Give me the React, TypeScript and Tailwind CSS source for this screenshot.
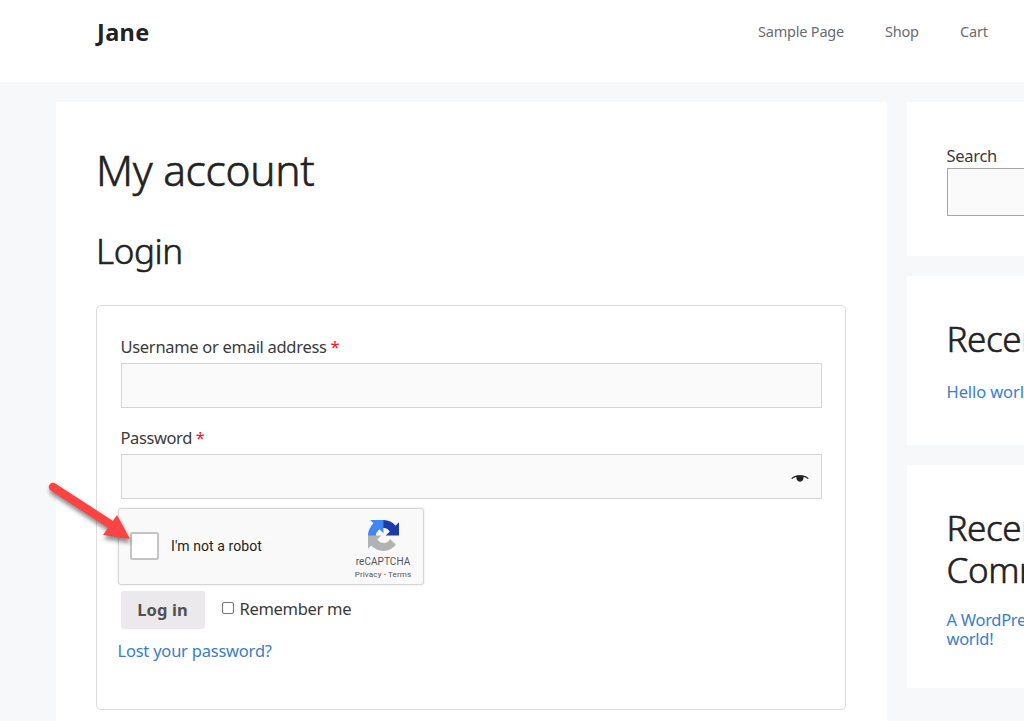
const navLinks = [
  { title: "Sample Page", className: "w-[87px] tracking-[-0.2px]" },
  { title: "Shop", className: "w-[35px] tracking-[-0.2px]" },
  { title: "Cart", className: "w-[28px] tracking-[-0.2px]" },
];

const Navbar = () => {
  return (
    <header className="flex h-[82px] shrink-0 items-start justify-between bg-white pl-[97px] pr-9">
      <a className="mt-4 text-[23.5px] leading-8 font-bold tracking-[0.35px] text-[#222222]">
        Jane
      </a>
      <nav className="mt-[19px] flex gap-10 text-[14.5px] leading-6 text-[#6b6b70]">
        {navLinks.map((link) => (
          <a key={link.title} className={`${link.className} whitespace-nowrap`}>
            {link.title}
          </a>
        ))}
      </nav>
    </header>
  );
};

const EyeIcon = () => (
  <svg width="18" height="9" viewBox="0 0 18 9" fill="none">
    <path d="M0.7 4.6C4 1.2 13.5 0.8 17.3 4.6" stroke="#222" strokeWidth="1.3" />
    <path d="M5.6 1.6H12.2C13.3 4.5 11.8 7.7 9 7.7S4.6 4.5 5.6 1.6Z" fill="#222" />
  </svg>
);

const RecaptchaLogo = () => (
  <svg width="31" height="31" viewBox="0 0 64 64">
    <path
      fill="#1c3aa9"
      d="M64 31.955l-.016-1.37V4.687l-7.16 7.16C50.965 4.674 42.033.093 32.05.093c-10.4 0-19.622 4.96-25.458 12.64l11.736 11.86a15.55 15.55 0 0 1 4.754-5.334c2.05-1.6 4.952-2.906 8.968-2.906.485 0 .86.057 1.135.163 4.976.393 9.288 3.14 11.828 7.124l-8.307 8.307L64 31.953"
    />
    <path
      fill="#4285f4"
      d="M31.862.094l-1.37.016H4.594l7.16 7.16C4.58 13.147 0 22.08 0 32.046c0 10.4 4.96 19.622 12.64 25.458L24.5 45.768a15.55 15.55 0 0 1-5.334-4.754c-1.6-2.05-2.906-4.952-2.906-8.968 0-.485.057-.86.163-1.135.393-4.976 3.14-9.288 7.124-11.828l8.307 8.307L31.86.095"
    />
    <path
      fill="#b2b2b2"
      d="M.001 32.045l.016 1.37v25.898l7.16-7.16c5.86 7.173 14.774 11.754 24.774 11.754 10.4 0 19.622-4.96 25.458-12.64l-11.736-11.86a15.55 15.55 0 0 1-4.754 5.334c-2.05 1.6-4.952 2.906-8.968 2.906-.485 0-.86-.057-1.135-.163-4.976-.393-9.288-3.14-11.828-7.124l8.307-8.307L0 32.045"
    />
  </svg>
);

const Recaptcha = () => {
  return (
    <div className="-ml-[3px] mt-[9px] flex h-[77px] w-[306.5px] items-center rounded-[3px] border border-[#d6d6d6] bg-[#f9f9f9] font-['Roboto',sans-serif] shadow-[0_0_3px_rgba(0,0,0,0.1)]">
      <div className="ml-[11.5px] -mt-0.5 h-7 w-[29px] rounded-[2px] border-2 border-[#c4c4c4] bg-white" />
      <span className="ml-3 w-[120px] whitespace-nowrap text-[14px] tracking-[0.08px] text-[#222222]">
        I'm not a robot
      </span>
      <div className="ml-[52px] flex w-[80px] flex-col items-center pt-1.5 whitespace-nowrap text-[#555555]">
        <RecaptchaLogo />
        <span className="mt-[3px] text-[10px] leading-4 tracking-[0.05px]">reCAPTCHA</span>
        <span className="text-[8px] leading-[10px] tracking-[0.15px]">Privacy - Terms</span>
      </div>
    </div>
  );
};

const Arrow = () => (
  <svg
    className="absolute left-10 top-[474px] drop-shadow-[1px_4px_2px_rgba(0,0,0,0.45)]"
    width="104"
    height="84"
    viewBox="0 0 104 84"
  >
    <path d="M13 13L70 50" stroke="#ff4242" strokeWidth="8.5" strokeLinecap="round" />
    <path d="M77 41L90 65L63 61Z" fill="#ff4242" />
  </svg>
);

const LoginForm = () => {
  return (
    <form className="mt-8 h-[405px] w-[750px] rounded-[5px] border border-[#dcdcde] px-[23.5px] pt-[29px]">
      <label className="block leading-6">
        Username or email address <span className="text-[#ff1111]">*</span>
      </label>
      <div className="mt-1 h-[45px] border border-[#d4d4d4] bg-[#fafafa]" />
      <label className="mt-[18px] block leading-6 tracking-[-0.4px]">
        Password <span className="text-[#ff1111]">*</span>
      </label>
      <div className="mt-1 flex h-[45px] items-center justify-end border border-[#d4d4d4] bg-[#fafafa] pr-3 pt-[3px]">
        <EyeIcon />
      </div>
      <Recaptcha />
      <div className="mt-1.5 flex h-[38px] items-center">
        <button
          type="button"
          className="h-[38px] w-[84px] rounded-[3px] bg-[#ebe9eb] font-bold tracking-[0.1px] text-[#515151]"
        >
          Log in
        </button>
        <span className="-mt-1 ml-[17.5px] h-3 w-3 rounded-[2px] border border-[#767676] bg-white" />
        <span className="-mt-0.5 ml-[5.5px] whitespace-nowrap">Remember me</span>
      </div>
      <a className="-ml-[3px] mt-2.5 block leading-6 tracking-[-0.22px] text-[#3c7dc8]">
        Lost your password?
      </a>
    </form>
  );
};

const Sidebar = () => {
  return (
    <aside className="flex w-[320px] shrink-0 flex-col gap-5">
      <section className="h-[154px] bg-white pl-10 pt-[42px]">
        <label className="block leading-6">Search</label>
        <div className="h-12 w-[240px] border border-[#a6a6a6] bg-[#fafafa]" />
      </section>
      <section className="h-[169px] bg-white pl-10 pt-[42px]">
        <h2 className="text-[35px] leading-[42px] font-light tracking-[-0.4px] text-[#222222] [-webkit-text-stroke:0.6px_#222222]">
          Recent Posts
        </h2>
        <a className="mt-5 block leading-6 tracking-[-0.1px] text-[#3c7dc8]">Hello world!</a>
      </section>
      <section className="h-[223px] bg-white pl-10 pt-[42px]">
        <h2 className="text-[35px] leading-[42px] font-light tracking-[-0.4px] text-[#222222] [-webkit-text-stroke:0.6px_#222222]">
          Recent
          <br />
          Comments
        </h2>
        <p className="mt-5 leading-[18.5px] text-[#3c7dc8]">
          A WordPress Commenter on Hello
          <br />
          world!
        </p>
      </section>
    </aside>
  );
};

const App = () => {
  return (
    <div className="relative flex h-[721px] w-[1024px] flex-col overflow-hidden bg-[#f7f8fa] font-['Noto_Sans',sans-serif] text-[16.5px] tracking-[-0.3px] text-[#3a3a3a]">
      <Navbar />
      <div className="flex min-h-0 flex-1 gap-5 pl-14 pt-5">
        <main className="w-[830.5px] shrink-0 bg-white pl-10 pt-[43px]">
          <h1 className="text-[42.5px] leading-[50px] font-light tracking-[-0.3px] text-[#222222] [-webkit-text-stroke:0.6px_#222222]">
            My account
          </h1>
          <h2 className="mt-[34px] text-[35px] leading-[44px] font-light tracking-[-0.4px] text-[#222222] [-webkit-text-stroke:0.6px_#222222]">
            Login
          </h2>
          <LoginForm />
        </main>
        <Sidebar />
      </div>
      <Arrow />
    </div>
  );
};

export default App;
